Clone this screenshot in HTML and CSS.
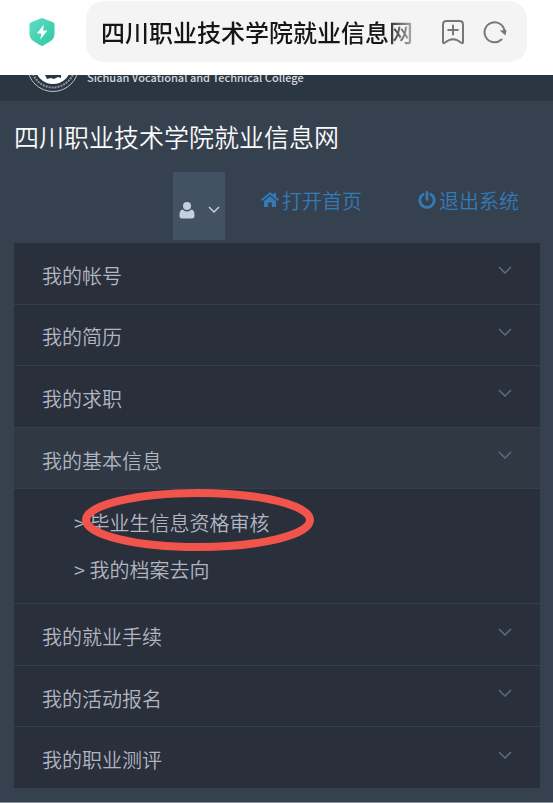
FILE: index.html
```html
<!DOCTYPE html>
<html lang="zh-CN">
<head>
<meta charset="utf-8">
<meta name="viewport" content="width=device-width, initial-scale=1">
<title>四川职业技术学院就业信息网</title>
<link rel="stylesheet" href="styles.css">
</head>
<body>
<div class="browser-bar">
  <svg class="shield" viewBox="0 0 26 30" aria-hidden="true">
    <defs><linearGradient id="mint" x1="0" y1="0" x2="1" y2="1"><stop offset="0" stop-color="#5fdcc8"/><stop offset="1" stop-color="#2fc99f"/></linearGradient></defs>
    <path fill="url(#mint)" d="M11.6 1.5Q13 .7 14.4 1.5L24 5.2Q25.500 5.900 25.500 7.500V17Q25.500 21.500 21 24.600L14.300 28.600Q13 29.300 11.700 28.600L5 24.600Q.5 21.500 .5 17V7.500Q.5 5.900 2 5.200Z"/>
    <path fill="#fff" d="M15 7.500L7.800 16.500H12.300L11.300 22.500L18.400 13.600H13.900Z"/>
  </svg>
  <div class="address">
    <input class="address-text" type="text" aria-label="地址" value="四川职业技术学院就业信息网">
    <button class="bar-button" type="button" aria-label="收藏">
      <svg class="bar-icon" viewBox="0 0 24 26" aria-hidden="true"><path d="M5.500 2H18.500Q22 2 22 5.500V23Q22 25 20.300 23.800Q16 20.200 12 20.200T3.700 23.800Q2 25 2 23V5.500Q2 2 5.500 2ZM12 6.500V15.500M7.200 11H16.800"/></svg>
    </button>
    <button class="bar-button" type="button" aria-label="刷新">
      <svg class="bar-icon" viewBox="0 0 24 26" aria-hidden="true"><path d="M18.500 20.500A10 10 0 1 1 21.500 12"/><path class="bar-arrow" d="M16.800 11.500L23.500 11L22.500 16.500Z"/></svg>
    </button>
  </div>
</div>
<header class="site-header">
  <svg class="seal" viewBox="0 0 52 18" aria-hidden="true">
    <g fill="none" stroke="#dfe4e8">
      <circle cx="26" cy="-9" r="25.500" stroke-width="1" opacity=".8"/>
      <circle cx="26" cy="-9" r="21.500" stroke-width="2" stroke-dasharray="2 1" opacity=".55"/>
    </g>
    <circle cx="26" cy="-9" r="18" fill="#fff"/>
    <path fill="#2b3643" d="M18 0H34V3L31 2L27 4L24 3L20 4Z"/>
  </svg>
  <span class="school-name">Sichuan Vocational and Technical College</span>
</header>
<main class="page">
  <h1 class="page-title">四川职业技术学院就业信息网</h1>
  <div class="toolbar">
    <button class="user-menu" type="button" aria-label="用户菜单">
      <svg class="user-icon" viewBox="0 0 16 17" aria-hidden="true"><rect x="4" y="0" width="8" height="8" rx="4"/><path d="M3.500 7.500Q5.500 9.500 8 9.500T12.500 7.500Q15.500 8.200 15.500 13V14Q15.500 16.500 13 16.500H3Q.5 16.500 .5 14V13Q.5 8.200 3.500 7.500Z"/></svg>
      <svg class="chevron" viewBox="0 0 14 8" aria-hidden="true"><path d="M2 1L7 6L12 1"/></svg>
    </button>
    <div class="links">
      <a class="link" href="#"><svg class="link-icon" viewBox="0 0 18 18" aria-hidden="true"><path fill="currentColor" d="M9 5L15 10V16H10.800V11.500H7.200V16H3V10ZM9 1L12.500 3.900V2H15V6L18 8.600L16.800 10L9 3.500L1.200 10L0 8.600Z"/></svg>打开首页</a>
      <a class="link" href="#"><svg class="link-icon" viewBox="0 0 18 18" aria-hidden="true"><path fill="none" stroke="currentColor" stroke-width="2.800" stroke-linecap="round" d="M9 1.400V8.500M5 3.300A7.200 7.200 0 1 0 13 3.300"/></svg>退出系统</a>
    </div>
  </div>
  <nav class="menu">
    <button class="menu-row" type="button">我的帐号<svg class="chevron" viewBox="0 0 14 8" aria-hidden="true"><path d="M1 1L7 7L13 1"/></svg></button>
    <button class="menu-row" type="button">我的简历<svg class="chevron" viewBox="0 0 14 8" aria-hidden="true"><path d="M1 1L7 7L13 1"/></svg></button>
    <button class="menu-row" type="button">我的求职<svg class="chevron" viewBox="0 0 14 8" aria-hidden="true"><path d="M1 1L7 7L13 1"/></svg></button>
    <button class="menu-row open" type="button" aria-expanded="true">我的基本信息<svg class="chevron" viewBox="0 0 14 8" aria-hidden="true"><path d="M1 1L7 7L13 1"/></svg></button>
    <div class="submenu">
      <a class="submenu-link" href="#">&gt; 毕业生信息资格审核<svg class="highlight" viewBox="0 0 234 64" aria-hidden="true"><ellipse cx="117" cy="32" rx="112" ry="27"/></svg></a>
      <a class="submenu-link" href="#">&gt; 我的档案去向</a>
    </div>
    <button class="menu-row" type="button">我的就业手续<svg class="chevron" viewBox="0 0 14 8" aria-hidden="true"><path d="M1 1L7 7L13 1"/></svg></button>
    <button class="menu-row" type="button">我的活动报名<svg class="chevron" viewBox="0 0 14 8" aria-hidden="true"><path d="M1 1L7 7L13 1"/></svg></button>
    <button class="menu-row" type="button">我的职业测评<svg class="chevron" viewBox="0 0 14 8" aria-hidden="true"><path d="M1 1L7 7L13 1"/></svg></button>
  </nav>
</main>
</body>
</html>
```
FILE: styles.css
```css
* { box-sizing: border-box; }
body {
  margin: 0;
  min-height: 100vh;
  display: flex;
  flex-direction: column;
  background: #36414f;
  border-bottom: 1px solid #8a94a0;
  font-family: "Noto Sans CJK SC", sans-serif;
  font-size: 20px;
  font-weight: 350;
}
button, input { font: inherit; border: 0; padding: 0; background: none; }
svg { display: block; flex: none; }

.browser-bar {
  display: flex;
  padding: 1px 26px 13px 29px;
  background: #fff;
}
.shield { width: 26px; height: 30px; margin: 16px 31px 0 0; }
.address {
  flex: 1;
  min-width: 0;
  height: 61px;
  display: flex;
  align-items: center;
  gap: 18px;
  padding: 0 20px 0 15px;
  border-radius: 18px;
  background: #f4f4f4;
}
.address-text {
  flex: 1;
  min-width: 0;
  height: 40px;
  margin-right: 10px;
  font-size: 24px;
  font-weight: 500;
  color: #161616;
  -webkit-mask-image: linear-gradient(to left, rgba(0, 0, 0, .3), #000 28px);
  mask-image: linear-gradient(to left, rgba(0, 0, 0, .3), #000 28px);
}
.bar-icon { width: 24px; height: 26px; fill: none; stroke: #777; stroke-width: 2; stroke-linecap: round; }
.bar-icon .bar-arrow { fill: #777; stroke: none; }

.site-header {
  display: flex;
  align-items: flex-start;
  gap: 8px;
  height: 26px;
  padding-left: 27px;
  overflow: hidden;
  background: #2b3643;
}
.seal { width: 52px; height: 18px; }
.school-name {
  margin-top: -6px;
  font: 500 11px/16px "Noto Sans CJK SC", sans-serif;
  color: #d5dade;
  white-space: nowrap;
}

.page {
  flex: 1;
  display: flex;
  flex-direction: column;
  padding: 17px 13px 14px 14px;
}
.page-title {
  margin: 0 0 18px;
  font-size: 25px;
  font-weight: 350;
  line-height: 36px;
  color: #fafafa;
}
.toolbar {
  display: flex;
  justify-content: flex-end;
  gap: 36px;
  margin-bottom: 3px;
  padding-right: 21px;
}
.user-menu {
  display: flex;
  align-items: center;
  gap: 12px;
  width: 52px;
  height: 68px;
  padding: 8px 4px 0 6px;
  background: #425264;
}
.user-icon { width: 16px; height: 17px; fill: #c6cfdc; }
.user-menu .chevron { stroke: #c6cfdc; }
.links { display: flex; gap: 56px; padding-top: 13px; }
.link {
  display: flex;
  align-items: center;
  gap: 3px;
  height: 30px;
  color: #337ab7;
  text-decoration: none;
}
.link-icon { width: 18px; height: 18px; }

.menu { flex: 1; display: flex; flex-direction: column; background: #292f3b; }
.menu-row {
  flex: 1;
  min-height: 60px;
  display: flex;
  align-items: center;
  justify-content: space-between;
  padding: 4px 28px 0;
  border-bottom: 1px solid #353f4c;
  color: #b1b6c2;
  text-align: left;
}
.menu-row:last-child { border-bottom: 0; }
.menu-row.open { background: #2f3843; }
.chevron { width: 14px; height: 8px; fill: none; stroke: #606c7e; stroke-width: 1.5; }
.menu-row .chevron { margin-bottom: 10px; }
.submenu {
  padding: 10px 0 10px 60px;
  border-bottom: 1px solid #353f4c;
}
.submenu-link {
  position: relative;
  display: block;
  width: fit-content;
  line-height: 47px;
  color: #b1b6c2;
  text-decoration: none;
}
.highlight {
  position: absolute;
  left: 7px;
  top: -11px;
  width: 234px;
  height: 64px;
  fill: none;
  stroke: #f0544b;
  stroke-width: 8;
  pointer-events: none;
}
```
